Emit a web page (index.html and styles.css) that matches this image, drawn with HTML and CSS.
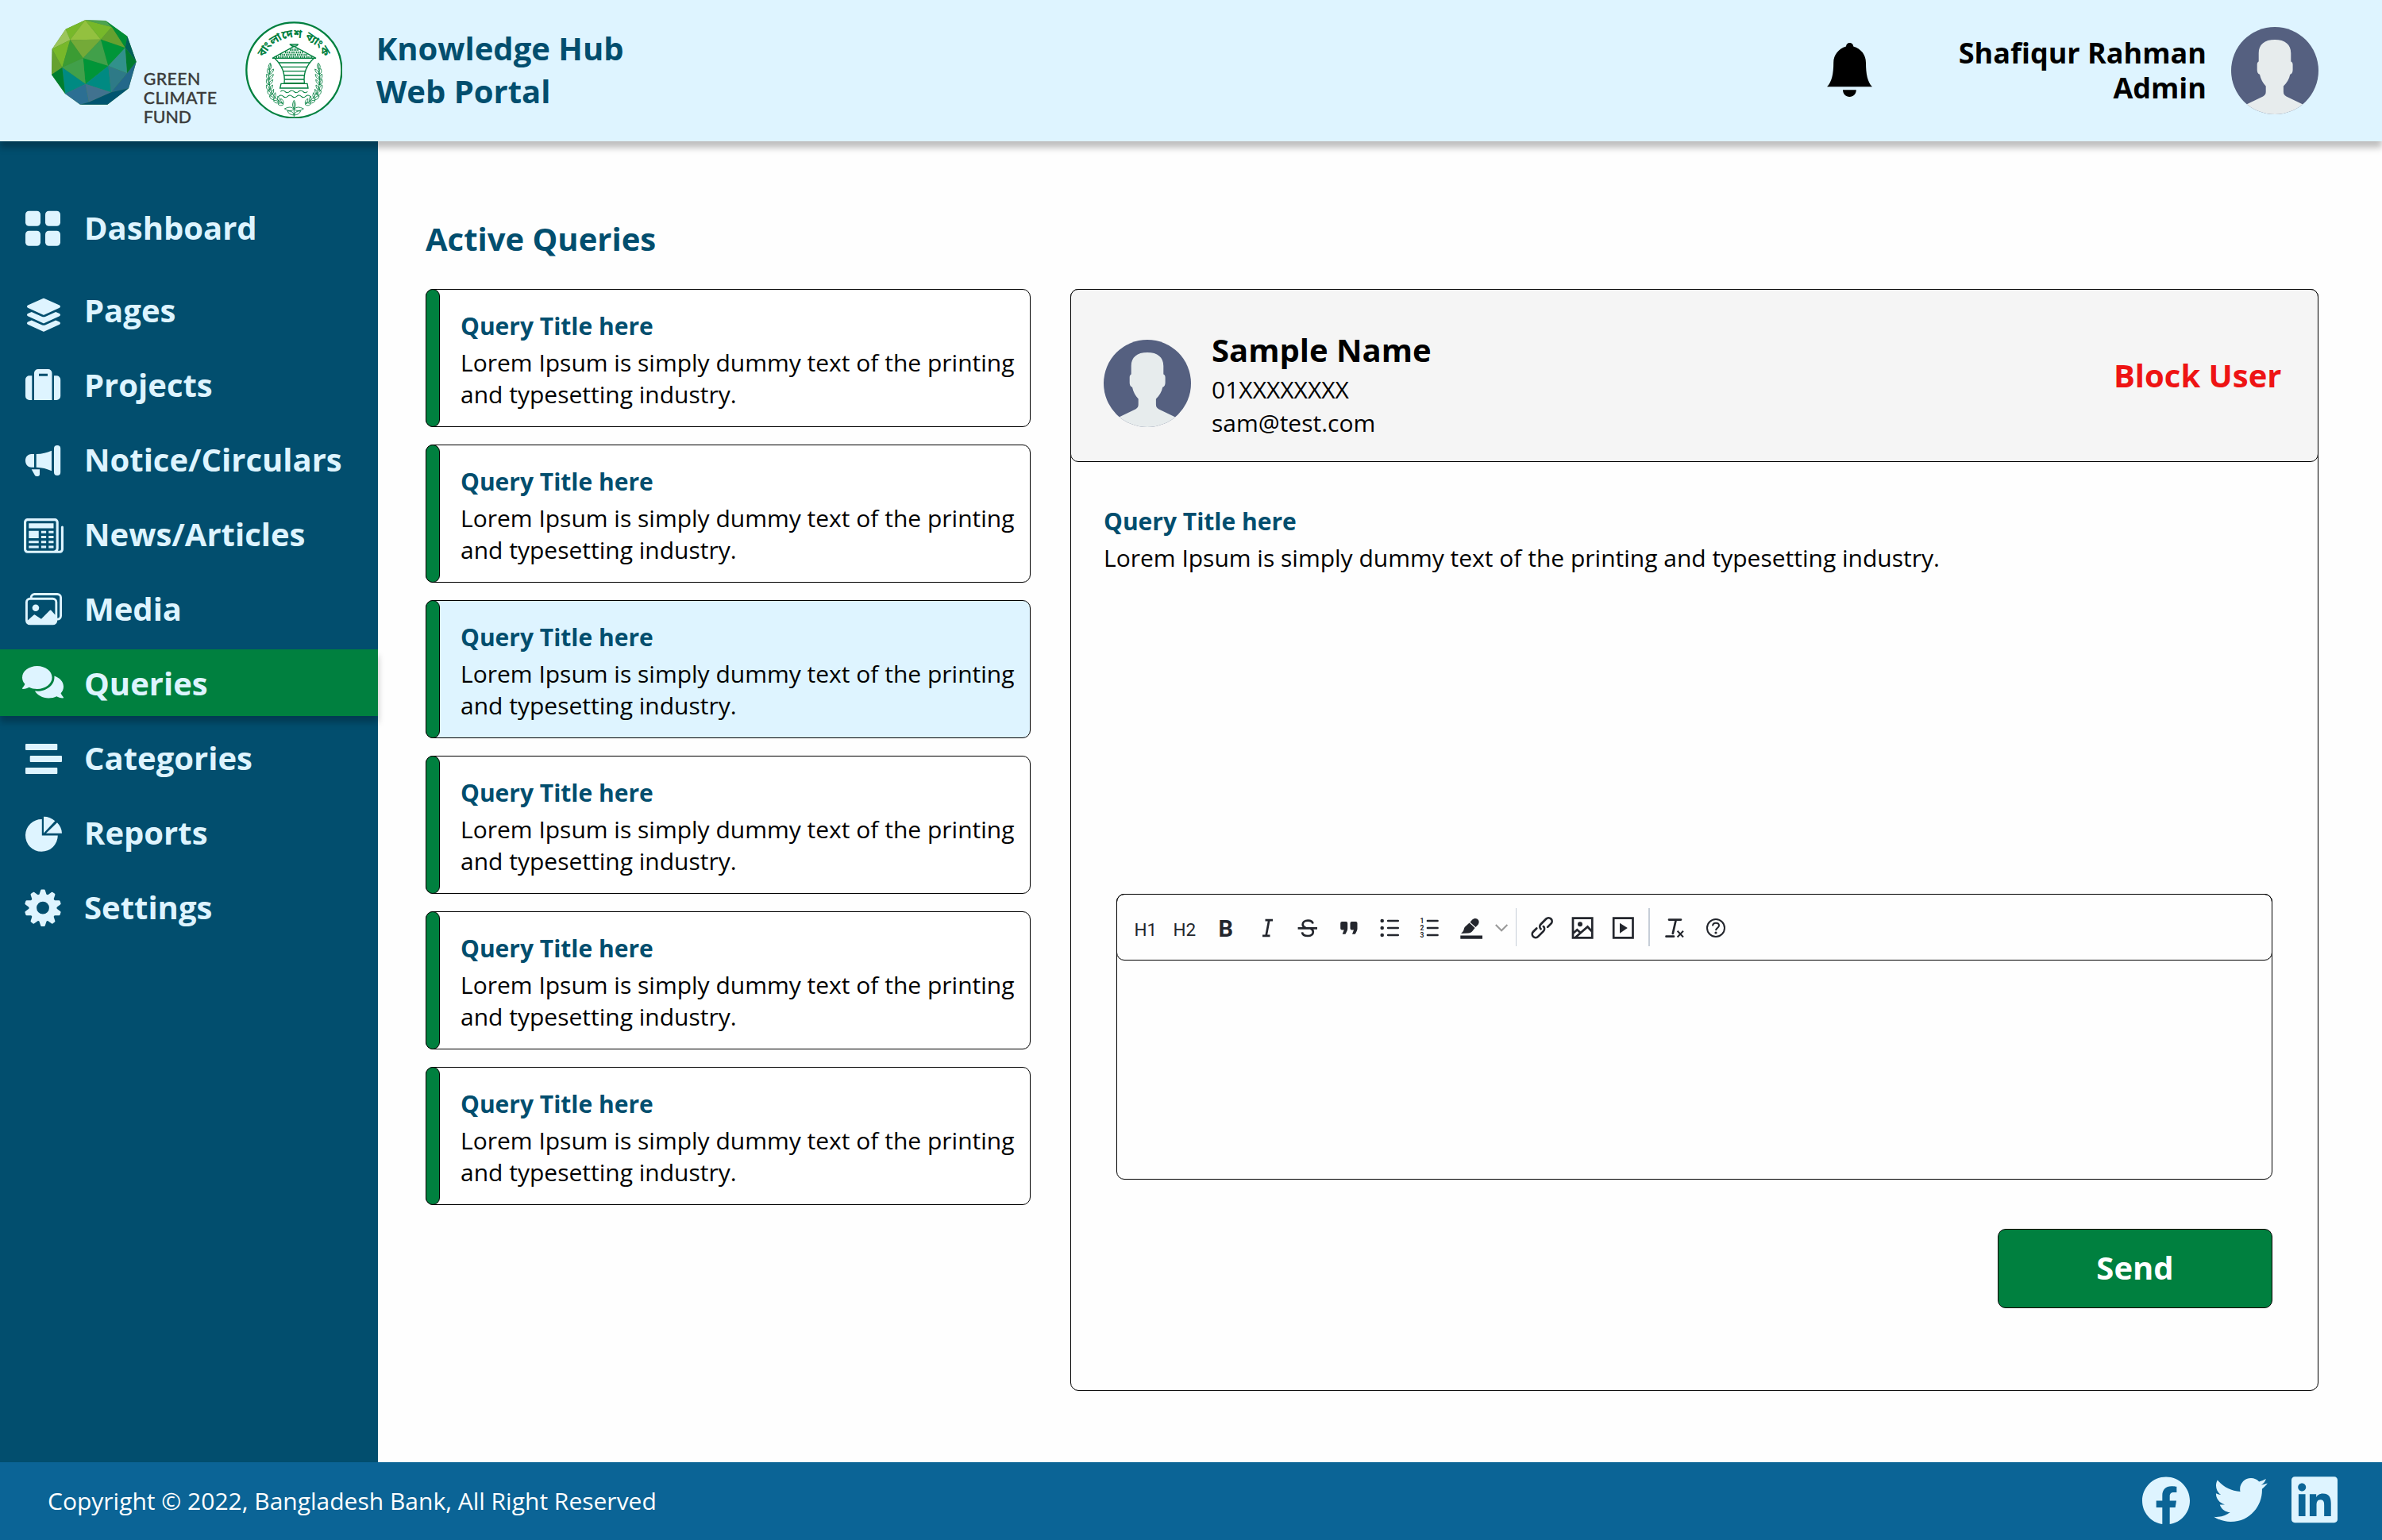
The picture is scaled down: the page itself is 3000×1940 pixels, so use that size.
FILE: index.html
```html
<!DOCTYPE html>
<html lang="en">
<head>
<meta charset="utf-8">
<title>Knowledge Hub Web Portal</title>
<link rel="stylesheet" href="styles.css">
</head>
<body>
<svg class="defs" width="0" height="0" aria-hidden="true">
  <symbol id="avatar" viewBox="0 0 110 110">
    <clipPath id="avatar-clip"><circle cx="55" cy="55" r="55"/></clipPath>
    <circle cx="55" cy="55" r="55" fill="#556080"/>
    <path clip-path="url(#avatar-clip)" fill="#e7eced" d="M34.700 43.500V33C34.700 22 42 16 55 16s20.300 6 20.300 17v10.500c1.500.5 2.300 2 2.300 4V54c0 3-1 5-3.300 5.700-1.300 6-4 10.500-8.400 14.800v7c0 3 1 4.500 3.600 6l21.300 10.200V112h-72V97.700l21.300-10.200c2.600-1.500 3.600-3 3.600-6v-7c-4-4.300-6.400-8.800-7.700-14.800-2.300-.7-3.300-2.700-3.300-5.700v-6.500c0-2 .8-3.500 2-4z"/>
  </symbol>
</svg>

<header class="header">
  <div class="brand">
    <svg class="gcf" viewBox="76 76 642 402" role="img" aria-label="Green Climate Fund">
      <g stroke-width=".8" stroke-linejoin="round">
        <path fill="#4b8a3c" d="M203 77 280 79 362 138 396 234 367 335 287 396H184L127 355 76 283 78 186 129 111z"/>
        <path fill="#77b82a" d="M129 111 203 77 146 152z"/>
        <path fill="#9cc55b" d="M129 111 146 152 78 186z"/>
        <path fill="#77b82a" d="M78 186 146 152 116 256z"/>
        <path fill="#65a12f" d="M78 186 116 256 76 283z"/>
        <path fill="#93c13f" d="M203 77 262 150 146 152z"/>
        <path fill="#77b82a" d="M203 77 303 103 262 150z"/>
        <path fill="#4da350" d="M203 77 280 79 303 103z"/>
        <path fill="#008d35" d="M280 79 362 138 354 182 303 103z"/>
        <path fill="#65a12f" d="M262 150 303 103 354 182z"/>
        <path fill="#006059" d="M362 138 396 234 354 182z"/>
        <path fill="#007a2e" d="M354 182 396 234 361 278z"/>
        <path fill="#74aa38" d="M146 152 262 150 195 221z"/>
        <path fill="#3b9c33" d="M146 152 195 221 116 256z"/>
        <path fill="#41a04a" d="M262 150 290 250 195 221z"/>
        <path fill="#009538" d="M262 150 354 182 290 250z"/>
        <path fill="#31918b" d="M354 182 361 278 290 250z"/>
        <path fill="#009538" d="M195 221 290 250 204 318z"/>
        <path fill="#41a04a" d="M195 221 204 318 116 256z"/>
        <path fill="#008a82" d="M116 256 204 318 127 355z"/>
        <path fill="#008a82" d="M290 250 301 350 204 318z"/>
        <path fill="#007f2f" d="M76 283 116 256 127 355z"/>
        <path fill="#2e7a87" d="M290 250 361 278 301 350z"/>
        <path fill="#23688a" d="M361 278 396 234 367 335 301 350z"/>
        <path fill="#2c6f93" d="M127 355 204 318 217 387 184 396z"/>
        <path fill="#41728f" d="M204 318 301 350 217 387z"/>
        <path fill="#00546f" d="M301 350 367 335 287 396 184 396 217 387z"/>
      </g>
      <g class="gcf-text">
        <text x="423" y="323" textLength="215">GREEN</text>
        <text x="423" y="395" textLength="277">CLIMATE</text>
        <text x="423" y="467" textLength="181">FUND</text>
      </g>
    </svg>
    <svg class="bank" viewBox="806 80 368 368" role="img" aria-label="Bangladesh Bank">
      <circle cx="990" cy="264" r="180" fill="#fff" stroke="#00803f" stroke-width="7"/>
      <path id="arc" fill="none" d="M876 218A123 123 0 0 1 1105 220"/>
      <text class="bank-text"><textPath href="#arc" textLength="288">বাংলাদেশ ব্যাংক</textPath></text>
      <g fill="none" stroke="#00803f" stroke-width="4">
        <path d="M973 167H1006M975 167C982 176 1000 176 1006 167M990 174 908 219H1073L990 174"/>
        <path stroke-width="8" stroke-dasharray="4 3" d="M974 187H1006M956 197H1024M938 206H1042M922 215H1060"/>
        <path d="M918 220C944 246 957 280 953 313H1029C1025 280 1036 246 1064 220"/>
        <path d="M932 236H1050M941 252H1041M948 268H1034M952 284H1030M954 299H1028"/>
        <path d="M941 315H1040L1043 332H937z"/>
        <path stroke-width="3" d="M939 345q9-8 17 0t17 0 17 0 17 0 17 0 17 0M932 363q9-8 17 0t17 0 17 0 17 0 17 0 17 0 17 0"/>
        <path stroke-width="2.500" d="M901 240C889 300 890 360 950 392M1081 240C1093 300 1092 360 1032 392"/>
        <path stroke-width="2.500" d="M990 440V385M990 378q-11 18 0 32 11-14 0-32M990 412q-12-15-36-2 20 14 36 2M990 412q12-15 36-2-20 14-36 2M990 434q-3-16-25-16 5 15 25 16M990 434q3-16 25-16-5 15-25 16"/>
        <g id="laurel" stroke-width="2.500">
          <path d="M899 262q-12-10 1-25 9 14-1 25M896 280q-12-8-5-22 12 9 5 22M898 280q14-6 15-20-14 5-15 20M894 300q-12-8-7-22 12 9 7 22M896 300q14-6 16-20-15 5-16 20M893 320q-12-8-6-22 11 9 6 22M895 320q14-6 15-20-14 5-15 20M895 341q-13-7-9-21 13 7 9 21M897 341q13-7 12-21-13 7-12 21M902 360q-14-5-12-19 14 5 12 19M905 358q11-9 8-22-12 9-8 22M914 376q-15-1-17-15 16 1 17 15M917 372q8-12 2-23-10 11-2 23M932 388q-14 3-20-9 14-4 20 9M933 384q5-13-4-22-6 12 4 22M950 394q-12 8-21-2 13-9 21 2M950 390q1-13-10-18-2 13 10 18"/>
        </g>
        <use href="#laurel" transform="matrix(-1 0 0 1 1982 0)"/>
      </g>
    </svg>
    <h1 class="portal">Knowledge Hub<br>Web Portal</h1>
  </div>
  <div class="account">
    <svg class="bell" viewBox="0 0 57 68"><path d="M24 4.500a4.600 4.600 0 0 1 9.200 0C43 7.500 49 15 49 25c0 14 2 24.500 8 30.300H0C6 49.500 8.200 39 8.200 25 8.200 15 14.500 7.500 24 4.500zM20 59.300h16.800c0 5-3.600 8.700-8.400 8.700S20 64.300 20 59.300z"/></svg>
    <p class="who">Shafiqur Rahman<br>Admin</p>
    <svg class="avatar"><use href="#avatar"/></svg>
  </div>
</header>

<div class="middle">
  <nav class="sidebar">
    <a class="item first"><svg class="icon" viewBox="0 0 60 60"><rect x="8" y="9.700" width="19" height="19" rx="4.500"/><rect x="33" y="9.700" width="19" height="19" rx="4.500"/><rect x="8" y="34.700" width="19" height="19" rx="4.500"/><rect x="33" y="34.700" width="19" height="19" rx="4.500"/></svg>Dashboard</a>
    <a class="item"><svg class="icon" viewBox="0 0 60 60"><path transform="translate(10 15.700) scale(.082)" d="M12.410 148.020l232.940 105.670c6.800 3.090 14.490 3.090 21.290 0l232.940-105.670c16.550-7.510 16.550-32.520 0-40.030L266.650 2.310a25.607 25.607 0 0 0-21.290 0L12.410 107.980c-16.550 7.510-16.550 32.530 0 40.040zm487.180 88.280l-58.090-26.330-161.640 73.270c-7.560 3.430-15.590 5.170-23.860 5.170s-16.290-1.740-23.860-5.170L70.510 209.970l-58.100 26.330c-16.550 7.500-16.550 32.500 0 40l232.940 105.590c6.800 3.080 14.490 3.080 21.290 0L499.590 276.300c16.550-7.500 16.550-32.500 0-40zm0 127.800l-57.870-26.230-161.860 73.370c-7.560 3.430-15.590 5.170-23.860 5.170s-16.290-1.740-23.860-5.170L70.290 337.870 12.410 364.100c-16.550 7.500-16.550 32.500 0 40l232.940 105.590c6.800 3.080 14.490 3.080 21.290 0L499.590 404.100c16.550-7.500 16.550-32.500 0-40z"/></svg>Pages</a>
    <a class="item"><svg class="icon" viewBox="0 0 60 60"><path fill-rule="evenodd" d="M19 50V16a5 5 0 0 1 5-5h12.500a5 5 0 0 1 5 5v34zM25 16.700v3h11v-3zM16.300 19.300V50H13a5 5 0 0 1-5-5V24.300a5 5 0 0 1 5-5zM44 19.300h3.200a5 5 0 0 1 5 5V45a5 5 0 0 1-5 5H44z"/></svg>Projects</a>
    <a class="item"><svg class="icon" viewBox="0 0 60 60"><path d="M19 24v16.700h-3.500C11 40.700 8 37 8 32.300S11 24 15.500 24zM21.700 24C29 23.700 35 22.500 41 19.700v25.600C35 42.500 29 41 21.700 40.700zM15.700 43.300H26v6a2.700 2.700 0 0 1-2.700 2.700h-1c-1.500 0-2.400-.8-2.800-2z"/><rect x="44" y="13" width="8.200" height="38" rx="4.100"/></svg>Notice/Circulars</a>
    <a class="item"><svg class="icon" viewBox="0 0 60 60"><g transform="translate(6 7.900) scale(3.125)"><path d="M0 2.500A1.500 1.500 0 0 1 1.500 1h11A1.500 1.500 0 0 1 14 2.500v10.528c0 .3-.05.654-.238.972h.738a.5.5 0 0 0 .5-.5v-9a.5.5 0 0 1 1 0v9a1.500 1.500 0 0 1-1.500 1.500H1.497A1.497 1.497 0 0 1 0 13.500v-11zM12 14c.37 0 .654-.211.853-.441.092-.106.147-.279.147-.531V2.500a.5.5 0 0 0-.5-.5h-11a.5.5 0 0 0-.5.5v11c0 .278.223.5.497.5H12z"/><path d="M2 3h10v2H2V3zm0 3h4v3H2V6zm0 4h4v1H2v-1zm0 2h4v1H2v-1zm5-6h2v1H7V6zm3 0h2v1h-2V6zM7 8h2v1H7V8zm3 0h2v1h-2V8zm-3 2h2v1H7v-1zm3 0h2v1h-2v-1zm-3 2h2v1H7v-1zm3 0h2v1h-2v-1z"/></g></svg>News/Articles</a>
    <a class="item"><svg class="icon" viewBox="0 0 60 60"><g transform="translate(8 8.200) scale(2.875)"><path d="M4.502 9a1.500 1.500 0 1 0 0-3 1.500 1.500 0 0 0 0 3z"/><path d="M14.002 13a2 2 0 0 1-2 2h-10a2 2 0 0 1-2-2V5A2 2 0 0 1 2 3a2 2 0 0 1 2-2h10a2 2 0 0 1 2 2v8a2 2 0 0 1-1.998 2zM14 2H4a1 1 0 0 0-1 1h9.002a2 2 0 0 1 2 2v7A1 1 0 0 0 15 11V3a1 1 0 0 0-1-1zM2.002 4a1 1 0 0 0-1 1v8l2.646-2.354a.5.5 0 0 1 .63-.062l2.660 1.773 3.710-3.710a.5.5 0 0 1 .577-.094l1.777 1.947V5a1 1 0 0 0-1-1h-10z"/></g></svg>Media</a>
    <a class="item active"><svg class="icon" viewBox="0 0 60 60"><path transform="translate(4 6.100) scale(.0903)" d="M416 192c0-88.400-93.100-160-208-160S0 103.600 0 192c0 34.300 14.100 65.900 38 92-13.400 30.200-35.500 54.200-35.800 54.500-2.200 2.300-2.800 5.700-1.500 8.700S4.800 352 8 352c36.600 0 66.900-12.300 88.700-25 32.200 15.700 70.300 25 111.300 25 114.900 0 208-71.600 208-160zm122 220c23.900-26 38-57.700 38-92 0-66.900-53.500-124.200-129.300-148.100.9 6.600 1.300 13.300 1.300 20.100 0 105.900-107.700 192-240 192-10.800 0-21.300-.8-31.700-1.900C207.800 439.600 281.800 480 368 480c41 0 79.100-9.200 111.300-25 21.800 12.700 52.100 25 88.700 25 3.200 0 6.100-1.900 7.300-4.800 1.300-2.900.7-6.300-1.500-8.700-.3-.2-22.400-24.200-35.800-54.500z"/></svg>Queries</a>
    <a class="item"><svg class="icon" viewBox="0 0 60 60"><rect x="8" y="13" width="40.300" height="8" rx="1"/><rect x="13.700" y="28" width="40.300" height="8" rx="1"/><rect x="8" y="43" width="40.300" height="8" rx="1"/></svg>Categories</a>
    <a class="item"><svg class="icon" viewBox="0 0 60 60"><path d="M28.800 14v20.500h20A20.400 20.400 0 1 1 28.800 14zM31 31.500V10.700c5.500 0 10.500 2 14.300 5.600zM34 31.700 48 18.200c3.700 3.800 5.900 8.500 6 13.500z"/></svg>Reports</a>
    <a class="item"><svg class="icon" viewBox="0 0 60 60"><g transform="translate(30 31.700)"><circle r="12.700" fill="none" stroke="#def4ff" stroke-width="9.600"/>
      <path id="tooth" d="M-5-15.500-2.800-22.200q.3-1 1.200-1H1.600q.9 0 1.200 1L5-15.500z"/>
      <use href="#tooth" transform="rotate(36)"/><use href="#tooth" transform="rotate(72)"/><use href="#tooth" transform="rotate(108)"/><use href="#tooth" transform="rotate(144)"/><use href="#tooth" transform="rotate(180)"/><use href="#tooth" transform="rotate(216)"/><use href="#tooth" transform="rotate(252)"/><use href="#tooth" transform="rotate(288)"/><use href="#tooth" transform="rotate(324)"/></g></svg>Settings</a>
  </nav>

  <main class="content">
    <section class="queries">
      <h2 class="heading">Active Queries</h2>
      <div class="list">
        <article class="card"><div class="stripe"></div><div class="card-body"><h3 class="title">Query Title here</h3><p class="text">Lorem Ipsum is simply dummy text of the printing and typesetting industry.</p></div></article>
        <article class="card"><div class="stripe"></div><div class="card-body"><h3 class="title">Query Title here</h3><p class="text">Lorem Ipsum is simply dummy text of the printing and typesetting industry.</p></div></article>
        <article class="card selected"><div class="stripe"></div><div class="card-body"><h3 class="title">Query Title here</h3><p class="text">Lorem Ipsum is simply dummy text of the printing and typesetting industry.</p></div></article>
        <article class="card"><div class="stripe"></div><div class="card-body"><h3 class="title">Query Title here</h3><p class="text">Lorem Ipsum is simply dummy text of the printing and typesetting industry.</p></div></article>
        <article class="card"><div class="stripe"></div><div class="card-body"><h3 class="title">Query Title here</h3><p class="text">Lorem Ipsum is simply dummy text of the printing and typesetting industry.</p></div></article>
        <article class="card"><div class="stripe"></div><div class="card-body"><h3 class="title">Query Title here</h3><p class="text">Lorem Ipsum is simply dummy text of the printing and typesetting industry.</p></div></article>
      </div>
    </section>

    <section class="panel">
      <div class="panel-head">
        <svg class="avatar"><use href="#avatar"/></svg>
        <div class="person">
          <p class="name">Sample Name</p>
          <p class="contact">01XXXXXXXX</p>
          <p class="contact">sam@test.com</p>
        </div>
        <a class="block">Block User</a>
      </div>
      <div class="message">
        <h3 class="title">Query Title here</h3>
        <p class="text">Lorem Ipsum is simply dummy text of the printing and typesetting industry.</p>
      </div>
      <div class="editor">
        <div class="toolbar">
          <span class="tool"><svg viewBox="0 0 36 36"><text class="h" x="4.500" y="29">H1</text></svg></span>
          <span class="tool"><svg viewBox="0 0 36 36"><text class="h" x="2.500" y="29">H2</text></svg></span>
          <span class="tool"><svg viewBox="0 0 36 36"><text class="b" x="8.500" y="30">B</text></svg></span>
          <span class="tool"><svg viewBox="0 0 36 36"><path class="s" d="M15.500 9.200H25M12 28.800h9.500M20.300 9.200 16.600 28.800"/></svg></span>
          <span class="tool"><svg viewBox="0 0 36 36"><path class="s" d="M5.600 19.300H30M24.500 13.500C24 10.800 21.500 9.700 18.200 9.700c-4 0-6.500 1.900-6.500 4.700 0 2.200 1.500 3.700 4 4.700M21.500 19.500c2.300 1.100 3.300 2.500 3.300 4.500 0 3.200-2.800 5-6.600 5-4.100 0-6.900-1.700-7.200-4.700"/></svg></span>
          <span class="tool"><svg viewBox="0 0 36 36"><path id="qt" d="M9.200 11h5a2 2 0 0 1 2 2v6.500c0 1.500-.3 2.500-.8 3.500l-1.900 3.700H9.700l2-5.200H9.200a2 2 0 0 1-2-2V13a2 2 0 0 1 2-2z"/><use href="#qt" x="12.300"/></svg></span>
          <span class="tool"><svg viewBox="0 0 36 36"><circle cx="8.700" cy="10" r="2.300"/><circle cx="8.700" cy="19" r="2.300"/><circle cx="8.700" cy="28" r="2.300"/><path class="s" stroke-linecap="round" d="M16.200 10h12.500M16.200 19h12.500M16.200 28h12.500"/></svg></span>
          <span class="tool"><svg viewBox="0 0 36 36"><text class="n" x="5.500" y="13">1</text><text class="n" x="5.500" y="22">2</text><text class="n" x="5.500" y="31">3</text><path class="s" stroke-linecap="round" d="M15 10h12.500M15 19h12.500M15 28h12.500"/></svg></span>
          <span class="tool"><svg viewBox="0 0 36 36"><path d="M4.300 28.500H32v4.200H4.300zM19 8.700c2-1.700 4.400-2.300 6.300-1.200 2.700 1.600 3 4.600 1.300 7.200L23.500 18l-7-6.300zM15.600 12.600l7 6.400-3.200 4c-1.200 1.700-2.800 2.400-5 2.500L5 25.900c2.500-2 3.300-3.300 3.800-5.600.4-1.900 1.400-3 3-4.200z"/></svg></span>
          <span class="tool caret"><svg viewBox="0 0 24 36"><path fill="none" stroke="#999" stroke-width="2" d="M4.800 15l7.300 7.300 7.300-7.300"/></svg></span>
          <i class="sep"></i>
          <span class="tool"><svg viewBox="0 0 36 36"><g class="s" stroke-linecap="round" transform="translate(18.200 18.700) rotate(-45)"><path id="lk" d="M-5.500-4.300h-6a4.300 4.300 0 0 0 0 8.600H-2A4.300 4.300 0 0 0 2.300 0"/><use href="#lk" transform="rotate(180)"/></g></svg></span>
          <span class="tool"><svg viewBox="0 0 36 36"><path class="s" d="M6 6.700h24.300v24.600H6zM6 26l5.300-4.700 4.500 4M9 31l15.500-13.500 6 6.500"/><circle cx="15" cy="14.300" r="3"/></svg></span>
          <span class="tool"><svg viewBox="0 0 36 36"><path class="s" d="M6.200 6.700h24.300v24.600H6.200z"/><path d="M14 12.700 23.800 19 14 25.700z"/></svg></span>
          <i class="sep"></i>
          <span class="tool"><svg viewBox="0 0 36 36"><path class="s" stroke-linecap="round" d="M11 8.600h15M19.700 9 15.800 26M7.500 29.700H17"/><path class="s thin" d="M21.600 22.700l7.400 7.800M29 22.700l-7.400 7.800"/></svg></span>
          <span class="tool"><svg viewBox="0 0 36 36"><circle class="s thin" cx="18" cy="19" r="11"/><path class="s thin" d="M14 16.300c.2-2.200 1.800-3.500 4-3.500s4 1.300 4 3.300c0 2.800-3.800 2.800-4 6"/><circle cx="18" cy="25" r="1.600"/></svg></span>
        </div>
      </div>
      <button class="send">Send</button>
    </section>
  </main>
</div>

<footer class="footer">
  <p class="copy">Copyright © 2022, Bangladesh Bank, All Right Reserved</p>
  <div class="social">
    <svg width="60" height="60.500" viewBox="8 8 496 493"><path d="M504 256C504 119 393 8 256 8S8 119 8 256c0 123.780 90.690 226.380 209.250 245V327.690h-63V256h63v-54.640c0-62.150 37-96.480 93.670-96.480 27.140 0 55.520 4.840 55.520 4.840v61h-31.280c-30.800 0-40.410 19.120-40.410 38.730V256h68.780l-11 71.690h-57.780V501C413.310 482.380 504 379.780 504 256z"/></svg>
    <svg class="tw" width="68" height="55" viewBox="0 48 512 416"><path d="M459.370 151.716c.325 4.548.325 9.097.325 13.645 0 138.720-105.583 298.558-298.558 298.558-59.452 0-114.680-17.219-161.137-47.106 8.447.974 16.568 1.299 25.340 1.299 49.055 0 94.213-16.568 130.274-44.832-46.132-.975-84.792-31.188-98.112-72.772 6.498.974 12.995 1.624 19.818 1.624 9.421 0 18.843-1.300 27.614-3.573-48.081-9.747-84.143-51.980-84.143-102.985v-1.299c13.969 7.797 30.214 12.670 47.431 13.319-28.264-18.843-46.781-51.005-46.781-87.391 0-19.492 5.197-37.360 14.294-52.954 51.655 63.675 129.300 105.258 216.365 109.807-1.624-7.797-2.599-15.918-2.599-24.040 0-57.828 46.782-104.934 104.934-104.934 30.213 0 57.502 12.670 76.670 33.137 23.715-4.548 46.456-13.320 66.599-25.340-7.798 24.366-24.366 44.833-46.132 57.827 21.117-2.273 41.584-8.122 60.426-16.243-14.292 20.791-32.161 39.308-52.628 54.253z"/></svg>
    <svg width="58" height="58.500" viewBox="0 32 448 448"><path d="M416 32H31.900C14.300 32 0 46.500 0 64.300v383.400C0 465.500 14.300 480 31.900 480H416c17.600 0 32-14.500 32-32.300V64.300c0-17.800-14.400-32.300-32-32.300zM135.400 416H69V202.200h66.500V416zm-33.200-243c-21.300 0-38.500-17.300-38.500-38.500S80.900 96 102.200 96c21.200 0 38.500 17.300 38.500 38.500 0 21.300-17.200 38.500-38.500 38.500zm282.100 243h-66.400V312c0-24.800-.5-56.700-34.500-56.700-34.600 0-39.900 27-39.900 54.900V416h-66.400V202.200h63.700v29.200h.9c8.900-16.800 30.600-34.500 62.900-34.500 67.200 0 79.700 44.300 79.700 101.900V416z"/></svg>
  </div>
</footer>
</body>
</html>
```
FILE: styles.css
```css
* { box-sizing: border-box; }
body {
  margin: 0;
  width: 3000px;
  height: 1940px;
  display: flex;
  flex-direction: column;
  overflow: hidden;
  background: #fefefe;
  color: #000;
  font-family: "Open Sans", "Noto Sans", sans-serif;
}
h1, h2, h3, p { margin: 0; }
svg { display: block; flex: none; }
.defs { position: absolute; }

/* header */
.header {
  flex: none;
  height: 178px;
  display: flex;
  justify-content: space-between;
  background: #def4ff;
  box-shadow: 0 8px 8px rgba(0, 0, 0, .25);
  position: relative;
  z-index: 2;
}
.brand { display: flex; align-items: flex-start; padding-left: 65.4px; }
.gcf { width: 214px; height: 134px; margin-top: 25.2px; }
.gcf-text { font: 500 64px Lato, sans-serif; fill: #3c3c3b; stroke: #3c3c3b; stroke-width: 1; }
.bank { width: 122.7px; height: 122.7px; margin: 26.6px 0 0 29.2px; }
.bank-text { font: bold 43px "Noto Sans Bengali", "Noto Sans", sans-serif; fill: #00803f; }
.portal {
  margin: 34px 0 0 42.4px;
  font-size: 40px;
  font-weight: 700;
  line-height: 54px;
  color: #024e6e;
}
.account { display: flex; align-items: flex-start; padding-right: 80px; }
.bell { width: 57px; height: 68px; margin: 54px 108.5px 0 0; }
.who {
  margin: 45px 31px 0 0;
  font-size: 36px;
  font-weight: 700;
  line-height: 44px;
  text-align: right;
}
.avatar { width: 110px; height: 110px; }
.account .avatar { margin-top: 34px; }

/* sidebar */
.middle { flex: 1; display: flex; min-height: 0; }
.sidebar {
  flex: none;
  width: 476px;
  padding-top: 66px;
  display: flex;
  flex-direction: column;
  gap: 10px;
  background: #024e6e;
}
.item {
  height: 84px;
  padding-left: 24px;
  display: flex;
  align-items: center;
  gap: 22px;
  font-size: 40px;
  font-weight: 700;
  color: #def4ff;
  white-space: nowrap;
}
.item.first { margin-bottom: 10px; }
.item.active { background: #00803f; box-shadow: 0 8px 8px rgba(0, 0, 0, .25); }
.icon { width: 60px; height: 60px; fill: #def4ff; }

/* query list */
.content { flex: 1; display: flex; align-items: flex-start; gap: 50px; padding: 95px 80px 0 60px; }
.queries { width: 762px; flex: none; padding-top: 1px; }
.heading { font-size: 40px; font-weight: 700; line-height: 54px; color: #024e6e; }
.list { display: flex; flex-direction: column; gap: 22px; margin-top: 36px; }
.card {
  height: 174px;
  display: flex;
  border: 1px solid #000;
  border-radius: 10px;
  background: #fff;
}
.card.selected { background: #def4ff; }
.stripe {
  flex: none;
  width: 18px;
  margin: -1px 0 -1px -1px;
  border: 1px solid #000;
  border-radius: 9px;
  background: #00803f;
}
.card-body { padding: 25px 0 0 26px; }
.title { font-size: 30px; font-weight: 700; line-height: 41px; color: #024e6e; }
.text { margin-top: 6px; font-size: 30px; line-height: 40px; }

/* detail panel */
.panel {
  flex: 1;
  height: 1388px;
  margin-top: 91px;
  display: flex;
  flex-direction: column;
  border: 1px solid #000;
  border-radius: 10px;
}
.panel-head {
  flex: none;
  height: 218px;
  margin: -1px;
  padding: 0 45.5px 0 41px;
  display: flex;
  align-items: flex-start;
  border: 1px solid #000;
  border-radius: 10px;
  background: #f5f5f5;
}
.panel-head .avatar { margin-top: 63px; }
.person { margin: 49px 0 0 26px; flex: 1; }
.name { margin-bottom: 2px; font-size: 40px; font-weight: 700; line-height: 54px; }
.contact { font-size: 30px; line-height: 42px; }
.block { margin-top: 81px; font-size: 40px; font-weight: 700; line-height: 54px; color: #ee1414; }
.message { height: 545px; padding: 55px 41px 0; }
.editor { flex: none; height: 360px; margin: 0 57px; border: 1px solid #000; border-radius: 10px; }
.toolbar {
  height: 84px;
  margin: -1px;
  padding-left: 9px;
  display: flex;
  align-items: center;
  border: 1px solid #000;
  border-radius: 10px;
}
.tool { flex: none; width: 51.4px; display: flex; justify-content: center; fill: #23262d; }
.tool svg { width: 36px; height: 36px; }
.tool.caret { width: 24px; }
.tool.caret svg { width: 24px; }
.s { fill: none; stroke: #23262d; stroke-width: 2.7; }
.thin { stroke-width: 2; }
.h { font: 400 22.5px Roboto, sans-serif; }
.b { font: 700 29px Roboto, sans-serif; }
.n { font: 700 8.5px Roboto, sans-serif; }
.sep { flex: none; width: 1.5px; height: 48px; margin: 0 6px; background: #c6ced8; }
.send {
  width: 346px;
  height: 100px;
  margin: 62px 57px 0 auto;
  padding: 0 0 3px;
  border: 1px solid #000;
  border-radius: 10px;
  background: #00803f;
  color: #fff;
  font: 700 40px "Open Sans", sans-serif;
}

/* footer */
.footer {
  flex: none;
  height: 98px;
  padding: 0 56px 0 60px;
  display: flex;
  justify-content: space-between;
  align-items: center;
  background: #0b6496;
  position: relative;
}
.copy { padding-bottom: 2px; font-size: 30px; line-height: 41px; color: #fff; }
.social { display: flex; align-items: flex-start; gap: 30px; height: 62px; fill: #def4ff; }
.tw { margin-top: 2px; }
```
